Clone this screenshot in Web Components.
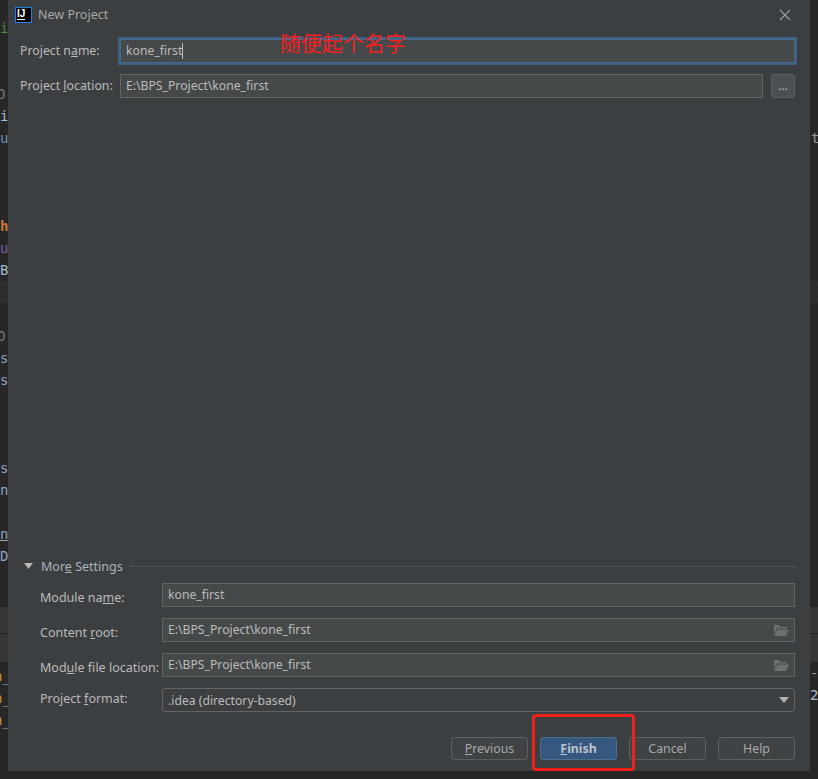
<!DOCTYPE html>
<html><head><meta charset="utf-8">
<style>
html,body{margin:0;padding:0;background:#262626}
body{width:818px;height:779px;overflow:hidden;font:12.5px "Noto Sans","Liberation Sans",sans-serif;color:#bbb}
</style></head><body>
<ide-desktop>
  <ide-gutter slot="left">
    <code-gap h="17"></code-gap>
    <code-line c="#4f8a3a">i</code-line><code-gap h="44"></code-gap>
    <code-line c="#777" dx="-3" >O</code-line>
    <code-line c="#a3bccf">i</code-line>
    <code-line c="#6f8fae">u</code-line>
    <code-gap h="66"></code-gap>
    <code-line c="#cc7832" b>h</code-line>
    <code-line c="#7a5fa6">u</code-line>
    <code-line c="#9fb6c8">B</code-line>
    <code-gap h="22" bg="#2d2d2d"></code-gap>
    <code-gap h="22"></code-gap>
    <code-line c="#777" dx="-3">O</code-line>
    <code-line c="#8da3b8">s</code-line>
    <code-line c="#8da3b8">s</code-line>
    <code-gap h="66"></code-gap>
    <code-line c="#8da3b8">s</code-line>
    <code-line c="#8da3b8">n</code-line>
    <code-gap h="22"></code-gap>
    <code-line c="#8da3b8" u>n</code-line>
    <code-line c="#8da3b8">D</code-line>
    <code-gap h="40"></code-gap>
    <code-gap h="26" bg="#343536"></code-gap>
    <code-gap h="1" bg="#222"></code-gap>
    <code-gap h="28" bg="#343536"></code-gap>
    <code-gap h="3"></code-gap>
    <code-line c="#c9913f" dx="-6">n<span style="color:#8fa6b8">_</span></code-line>
    <code-line c="#c9913f" dx="-6">n<span style="color:#8fa6b8">_</span></code-line>
    <code-line c="#c9913f" dx="-6">n<span style="color:#8fa6b8">_</span></code-line>
  </ide-gutter>

  <ide-dialog slot="main" heading="New Project">
    <project-row>
      <span slot="label">Project n<u>a</u>me:</span>
      <text-field focused>kone_first<i-caret></i-caret></text-field>
    </project-row>
    <project-row>
      <span slot="label">Project <u>l</u>ocation:</span>
      <text-field>E:\BPS_Project\kone_first</text-field>
      <dots-button slot="extra">...</dots-button>
    </project-row>
    <more-settings slot="footer">
      <span slot="title">Mor<u>e</u> Settings</span>
      <settings-row nudge="4">
        <span slot="label">Module na<u>m</u>e:</span>
        <text-field>kone_first</text-field>
      </settings-row>
      <settings-row nudge="4">
        <span slot="label">Content <u>r</u>oot:</span>
        <text-field folder>E:\BPS_Project\kone_first</text-field>
      </settings-row>
      <settings-row nudge="4">
        <span slot="label">Mod<u>u</u>le file location:</span>
        <text-field folder>E:\BPS_Project\kone_first</text-field>
      </settings-row>
      <settings-row nudge="-4">
        <span slot="label">Project <u>f</u>ormat:</span>
        <text-field select>.idea (directory-based)</text-field>
      </settings-row>
    </more-settings>
    <dialog-actions slot="footer">
      <ide-button><u>P</u>revious</ide-button>
      <ide-button primary><u>F</u>inish</ide-button>
      <ide-button>Cancel</ide-button>
      <ide-button>Help</ide-button>
    </dialog-actions>
  </ide-dialog>

  <ide-gutter slot="right">
    <code-gap h="127"></code-gap>
    <code-line c="#999" dx="1">t<span style="color:#5f93c4">e</span></code-line>
    <code-gap h="132"></code-gap>
    <code-gap h="22" bg="#2d2d2d"></code-gap>
    <code-gap h="304"></code-gap>
    <code-gap h="26" bg="#343536"></code-gap>
    <code-gap h="1" bg="#222"></code-gap>
    <code-gap h="28" bg="#343536"></code-gap>
    <code-line c="#999" dx="0" >-</code-line>
    <code-line c="#a9b7c6" dx="0">2</code-line>
  </ide-gutter>

  <ink-note slot="over" style="left:280px;top:29px">随便起个名字</ink-note>
  <ink-box slot="over" style="left:532px;top:714px;width:103px;height:57px"></ink-box>
</ide-desktop>

<script>
const define = (name, css, html, extra = {}) => {
  customElements.define(name, class extends HTMLElement {
    constructor() {
      super();
      this.attachShadow({ mode: 'open' }).innerHTML = `<style>${css}</style>${html}`;
    }
    connectedCallback() { extra.init && extra.init(this); }
  });
};

define('ide-desktop',
  `:host{display:grid;grid-template-columns:8px 802px 8px;grid-template-rows:771px 8px;width:818px;height:779px;position:relative;background:#262626}
   ::slotted([slot=left]){grid-column:1;grid-row:1 / span 2}
   ::slotted([slot=main]){grid-column:2;grid-row:1}
   ::slotted([slot=right]){grid-column:3;grid-row:1 / span 2}
   ::slotted([slot=over]){position:absolute}`,
  `<slot name="left"></slot><slot name="main"></slot><slot name="right"></slot><slot name="over"></slot>`);

define('ide-gutter',
  `:host{display:flex;flex-direction:column;overflow:hidden;width:8px;height:779px;background:#272727}`,
  `<slot></slot>`);

define('code-gap', `:host{display:block;flex:none}`, ``, {
  init(el) {
    el.style.height = el.getAttribute('h') + 'px';
    if (el.hasAttribute('bg')) el.style.background = el.getAttribute('bg');
  }
});

define('code-line',
  `:host{display:block;flex:none;height:22px;white-space:nowrap;font:14px/22px "DejaVu Sans Mono","Liberation Mono",monospace}`,
  `<slot></slot>`, {
  init(el) {
    el.style.color = el.getAttribute('c');
    el.style.marginLeft = (el.getAttribute('dx') || 0) + 'px';
    if (el.hasAttribute('b')) el.style.fontWeight = 'bold';
    if (el.hasAttribute('u')) el.style.textDecoration = 'underline';
  }
});

define('ide-dialog',
  `:host{display:flex;flex-direction:column;height:771px;background:#3c3f41}
   header{flex:none;height:29px;display:flex;align-items:center;padding:0 19px 0 7px;gap:6px;color:#a8a8a8;font-size:12.5px}
   .logo{width:14px;height:14px;border:1px solid #1b80e6;background:#000;display:flex;flex-direction:column;padding:0 0 0 1px;color:#fff;font:bold 10px/11px "Liberation Sans",sans-serif}
   .logo b{display:block;width:8px;height:1.5px;background:#fff}
   .title{flex:1}
   svg{display:block}
   main{flex:1;display:flex;flex-direction:column;gap:11px;padding:10px 15px 0 12px}
   footer{flex:none;display:flex;flex-direction:column;padding:0 15px 11px 12px}`,
  `<header><div class="logo">IJ<b></b></div><div class="title" id="t"></div>
     <svg width="12" height="12" viewBox="0 0 12 12"><path d="M1 1l10 10M11 1L1 11" stroke="#9c9c9c" stroke-width="1.1" fill="none"/></svg></header>
   <main><slot></slot></main><footer><slot name="footer"></slot></footer>`, {
  init(el) { el.shadowRoot.getElementById('t').textContent = el.getAttribute('heading'); }
});

define('project-row',
  `:host{display:flex;align-items:center;height:24px}
   .l{flex:none;width:100px;white-space:nowrap;padding-bottom:2px;font-size:12.3px}
   .f{flex:1;min-width:0;display:flex}
   .x{display:flex}
   .x ::slotted(*){margin-left:8px}`,
  `<div class="l"><slot name="label"></slot></div><div class="f"><slot></slot></div><div class="x"><slot name="extra"></slot></div>`);

define('text-field',
  `:host{display:flex;flex:1;align-items:center;box-sizing:border-box;height:24px;min-width:0;background:#45494a;border:1px solid #646464;padding:0 5px;color:#bbb;white-space:nowrap;font-size:12.2px}
   :host([focused]){box-shadow:0 0 0 2px #3d6185;border-color:#46698c}
   :host([select]){background:#3c3f41;border-radius:3px}
   .t{flex:1;padding-bottom:2px}
   :host([select]) .t{padding-bottom:0}
   svg{flex:none;display:none}
   :host([folder]) .fo,:host([select]) .ar{display:block}`,
  `<div class="t"><slot></slot></div>
   <svg class="fo" width="16" height="12" viewBox="0 0 16 12"><path d="M1 1h5l1.500 2H14v1.500H4L1 10z" fill="#6b7173"/><path d="M4.500 5.500H16L13 12H0.800z" fill="#6b7173"/></svg>
   <svg class="ar" width="10" height="6" viewBox="0 0 10 6"><path d="M0 0h10L5 6z" fill="#b4b4b4"/></svg>`);

define('i-caret',
  `:host{display:inline-block;width:1px;height:16px;background:#bbb;vertical-align:-4px}`, ``);

define('dots-button',
  `:host{display:block;box-sizing:border-box;width:24px;height:24px;background:#4c5052;border:1px solid #5e6060;border-radius:3px;text-align:center;line-height:22px;font-size:12px;color:#bbb}`,
  `<slot></slot>`);

define('more-settings',
  `:host{display:block}
   .h{display:flex;align-items:center;height:18px;margin-bottom:8px}
   svg{flex:none;margin:0 8px 0 4px}
   .t{flex:none;white-space:nowrap;color:#a9b4bd}
   .line{flex:1;height:1px;background:#515151;margin:0 -2px 0 6px}
   .rows{display:flex;flex-direction:column;gap:11px;padding-left:20px}`,
  `<div class="h"><svg width="9" height="6" viewBox="0 0 9 6"><path d="M0 0h9L4.500 6z" fill="#b9b9b9"/></svg><div class="t"><slot name="title"></slot></div><div class="line"></div></div>
   <div class="rows"><slot></slot></div>`);

define('settings-row',
  `:host{display:flex;align-items:center;height:24px}
   .l{flex:none;width:122px;white-space:nowrap}
   .f{flex:1;min-width:0;display:flex}`,
  `<div class="l" id="l"><slot name="label"></slot></div><div class="f"><slot></slot></div>`, {
  init(el) {
    const n = +el.getAttribute('nudge');
    const l = el.shadowRoot.getElementById('l');
    if (n > 0) l.style.paddingTop = n + 'px'; else l.style.paddingBottom = -n + 'px';
  }
});

define('dialog-actions',
  `:host{display:flex;justify-content:flex-end;gap:12px;margin-top:25px}`,
  `<slot></slot>`);

define('ide-button',
  `:host{display:block;box-sizing:border-box;width:77px;height:23px;border:1px solid #5e6060;border-radius:3px;background:#3f4345;color:#a9a9a9;text-align:center;line-height:21px;white-space:nowrap;font-size:12.3px}
   :host([primary]){background:#365880;border-color:#4c708c;color:#bbc3cb;font-weight:bold}`,
  `<slot></slot>`);

define('ink-note',
  `:host{display:block;color:#f52020;font:21px/26px "Noto Sans CJK SC",sans-serif;white-space:nowrap}`,
  `<slot></slot>`);

define('ink-box',
  `:host{display:block;box-sizing:border-box;border:3px solid #f0201a;border-radius:4px}`, ``);
</script>
</body></html>
